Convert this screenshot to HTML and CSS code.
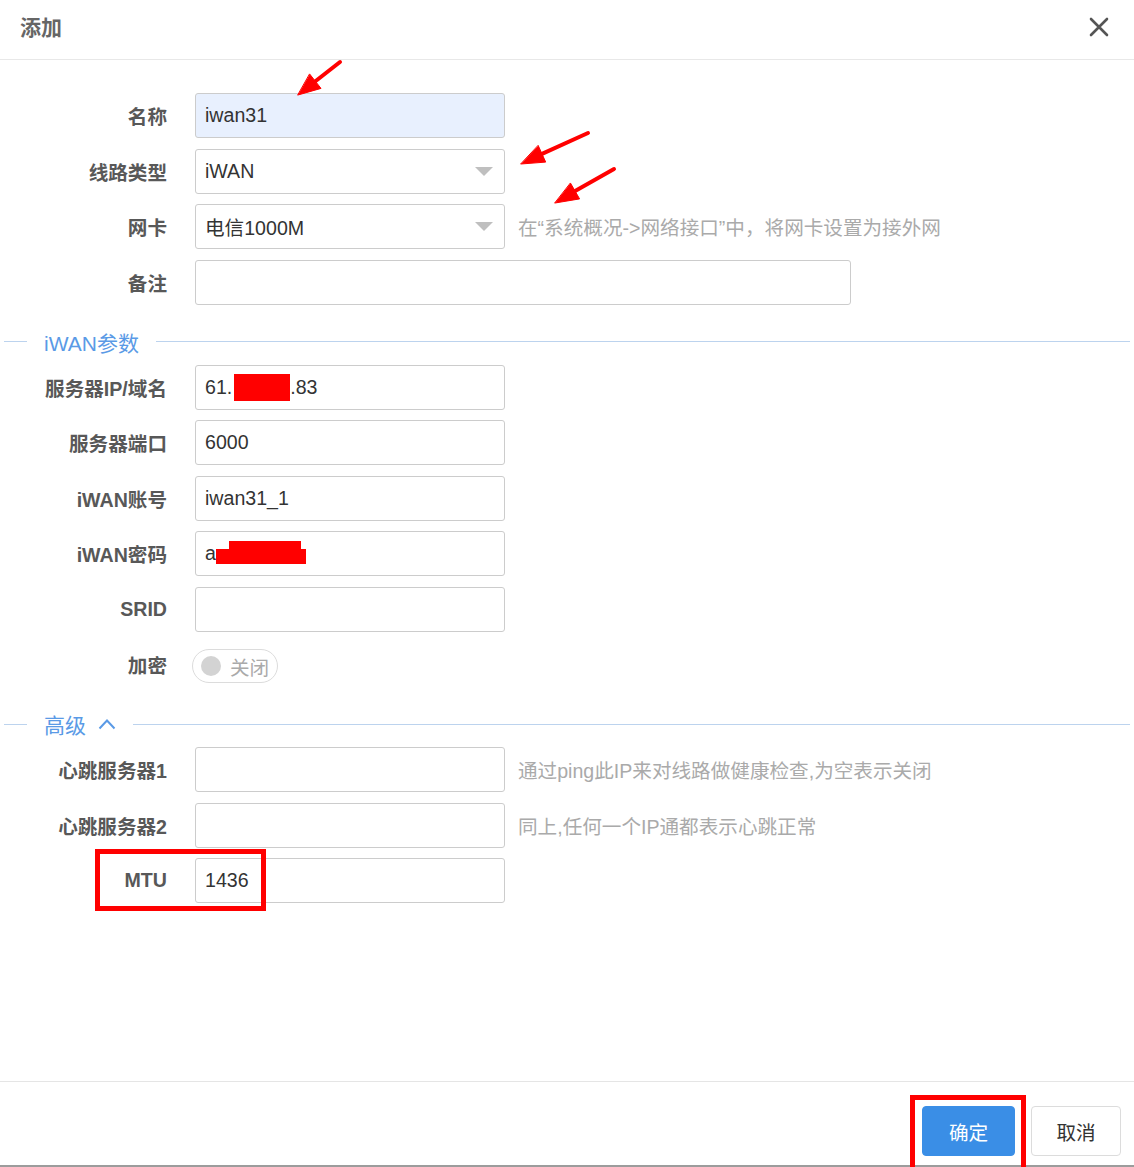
FILE: index.html
```html
<!DOCTYPE html>
<html lang="zh-CN">
<head>
<meta charset="utf-8">
<title>添加</title>
<link rel="stylesheet" href="styles.css">
</head>
<body>
<div class="dialog">
  <header class="dlg-head">
    <span class="title">添加</span>
    <svg class="close" width="20" height="20" viewBox="0 0 20 20"><path d="M2 2 L18 18 M18 2 L2 18" stroke="#555" stroke-width="2.6" stroke-linecap="round"/></svg>
  </header>
  <main class="dlg-body">
    <div class="form">
      <div class="row"><label class="lbl">名称</label><div class="field filled">iwan31</div></div>
      <div class="row"><label class="lbl">线路类型</label><div class="field select"><span>iWAN</span><span class="arrow"></span></div></div>
      <div class="row"><label class="lbl">网卡</label><div class="field select"><span>电信1000M</span><span class="arrow"></span></div><span class="hint">在“系统概况-&gt;网络接口”中，将网卡设置为接外网</span></div>
      <div class="row"><label class="lbl">备注</label><div class="field wide"></div></div>

      <div class="section"><span class="sline short"></span><span class="stitle">iWAN参数</span><span class="sline long"></span></div>

      <div class="row"><label class="lbl">服务器IP/域名</label><div class="field"><span>61.</span><span class="redact-ip"></span><span>.83</span></div></div>
      <div class="row"><label class="lbl">服务器端口</label><div class="field">6000</div></div>
      <div class="row"><label class="lbl">iWAN账号</label><div class="field">iwan31_1</div></div>
      <div class="row"><label class="lbl">iWAN密码</label><div class="field"><span>a</span><span class="redact-pw"></span></div></div>
      <div class="row"><label class="lbl">SRID</label><div class="field"></div></div>
      <div class="row"><label class="lbl lbl-toggle">加密</label><div class="toggle"><span class="knob"></span><span class="toggle-text">关闭</span></div></div>

      <div class="section"><span class="sline short"></span><span class="stitle adv">高级</span><svg class="caret" width="18" height="12" viewBox="0 0 18 12"><polyline points="1.5,10.5 9,2.5 16.5,10.5" fill="none" stroke="#5a9ae6" stroke-width="2"/></svg><span class="sline long"></span></div>

      <div class="row"><label class="lbl">心跳服务器1</label><div class="field"></div><span class="hint">通过ping此IP来对线路做健康检查,为空表示关闭</span></div>
      <div class="row"><label class="lbl">心跳服务器2</label><div class="field"></div><span class="hint">同上,任何一个IP通都表示心跳正常</span></div>
      <div class="row"><label class="lbl">MTU</label><div class="field">1436</div></div>
    </div>
  </main>
  <footer class="dlg-foot">
    <button class="btn primary">确定</button>
    <button class="btn default">取消</button>
  </footer>
</div>
<svg class="annot" width="1134" height="1167" viewBox="0 0 1134 1167">
  <g stroke="#ff0000" fill="#ff0000" stroke-linecap="round" stroke-linejoin="round">
    <line x1="340" y1="62" x2="315.4" y2="81.3" stroke-width="4"/>
    <polygon points="298,95 321,88.4 309.8,74.2" stroke-width="1"/>
    <line x1="588" y1="133" x2="542" y2="153.9" stroke-width="4"/>
    <polygon points="521,164 545.7,162.1 538.3,145.7" stroke-width="1"/>
    <line x1="614" y1="169" x2="575.1" y2="191.1" stroke-width="4"/>
    <polygon points="555,203 579.6,198.9 570.6,183.3" stroke-width="1"/>
  </g>
  <g fill="none" stroke="#ff0000" stroke-width="5">
    <rect x="97.5" y="851.5" width="166" height="57"/>
    <rect x="912.5" y="1097.5" width="111" height="72"/>
  </g>
</svg>
</body>
</html>
```
FILE: styles.css
```css
html, body {
  margin: 0;
  padding: 0;
}
body {
  width: 1134px;
  height: 1167px;
  overflow: hidden;
  position: relative;
  background: #fff;
  font-family: "Liberation Sans", "Noto Sans CJK SC", sans-serif;
}
.dialog {
  display: flex;
  flex-direction: column;
  height: 1165px;
  border-bottom: 2px solid #9c9c9c;
  background: #fff;
}
.dlg-head {
  height: 60px;
  box-sizing: border-box;
  border-bottom: 1px solid #e8e8e8;
  display: flex;
  align-items: center;
  justify-content: space-between;
  padding: 0 25px 7px 20px;
  flex: none;
}
.title {
  font-size: 21px;
  font-weight: bold;
  color: #666;
}
.close {
  display: block;
  margin-top: 2px;
}
.dlg-body {
  flex: 1;
  padding-top: 33px;
}
.form {
  display: flex;
  flex-direction: column;
  gap: 10.5px;
}
.row {
  display: flex;
  align-items: center;
  height: 45px;
}
.lbl {
  flex: none;
  width: 167px;
  margin-right: 28px;
  text-align: right;
  font-size: 19.6px;
  font-weight: bold;
  color: #585858;
}
.lbl-toggle {
  margin-right: 25px;
}
.field {
  flex: none;
  width: 310px;
  height: 45px;
  box-sizing: border-box;
  border: 1px solid #cccccc;
  border-radius: 3px;
  padding: 0 9px;
  display: flex;
  align-items: center;
  font-size: 19.6px;
  color: #333;
  background: #fff;
}
.field.filled {
  background: #e8f0fe;
}
.field.wide {
  width: 656px;
}
.field.select {
  justify-content: space-between;
  padding-right: 11px;
}
.arrow {
  width: 0;
  height: 0;
  border-left: 9px solid transparent;
  border-right: 9px solid transparent;
  border-top: 9px solid #bfbfbf;
}
.hint {
  margin-left: 13px;
  font-size: 19.6px;
  color: #aaa;
  white-space: nowrap;
}
.redact-ip {
  display: inline-block;
  width: 56px;
  height: 27px;
  margin-left: 2px;
  background: #ff0000;
}
.redact-pw {
  display: inline-block;
  position: relative;
  width: 90px;
  height: 15px;
  margin-top: 6px;
  background: #ff0000;
}
.redact-pw::before {
  content: "";
  position: absolute;
  left: 13px;
  top: -8px;
  width: 72px;
  height: 8px;
  background: #ff0000;
}
.section {
  display: flex;
  align-items: center;
  height: 25px;
  margin-top: 14px;
}
.sline {
  height: 1px;
  background: #bcd3ee;
}
.sline.short {
  width: 23px;
  margin-left: 4px;
}
.sline.long {
  flex: 1;
  margin-right: 4px;
}
.stitle {
  margin: 0 17px 0 17px;
  font-size: 21px;
  color: #5a9ae6;
}
.stitle.adv {
  margin-right: 12px;
}
.caret {
  display: block;
  margin-right: 17px;
}
.toggle {
  width: 86px;
  height: 34px;
  margin-top: 3px;
  box-sizing: border-box;
  border: 1px solid #dcdcdc;
  border-radius: 17px;
  display: flex;
  align-items: center;
  padding-left: 8px;
  gap: 9px;
}
.knob {
  width: 20px;
  height: 20px;
  border-radius: 50%;
  background: #d3d3d3;
}
.toggle-text {
  font-size: 19.6px;
  color: #aaa;
}
.dlg-foot {
  flex: none;
  height: 84px;
  box-sizing: border-box;
  border-top: 1px solid #e5e5e5;
  display: flex;
  justify-content: flex-end;
  align-items: flex-start;
  padding: 24px 13px 0 0;
  gap: 16px;
}
.btn {
  height: 50px;
  font-family: inherit;
  font-size: 19.6px;
  border-radius: 4px;
  padding: 0;
  cursor: pointer;
}
.btn.primary {
  width: 93px;
  background: #3a8ee6;
  border: 1px solid #3a8ee6;
  color: #fff;
}
.btn.default {
  width: 90px;
  background: #fff;
  border: 1px solid #dcdcdc;
  color: #333;
}
.annot {
  position: absolute;
  left: 0;
  top: 0;
  pointer-events: none;
}
```
